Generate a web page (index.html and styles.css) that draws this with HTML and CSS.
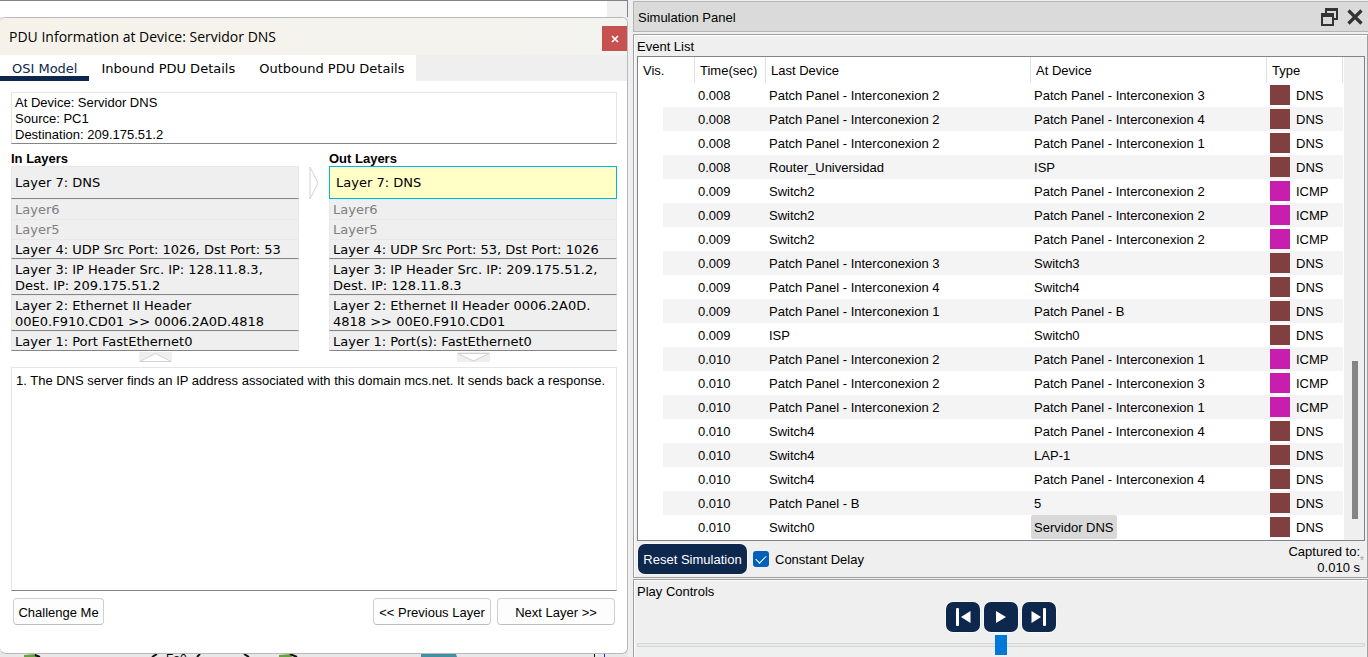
FILE: index.html
```html
<!DOCTYPE html>
<html lang="en">
<head>
<meta charset="utf-8">
<title>Simulation</title>
<link rel="stylesheet" href="styles.css">
</head>
<body>
<div class="app">
  <main class="workspace">
    <div class="canvas-top"><span class="canvas-scroll"></span></div>
    <section class="dialog" aria-label="PDU Information">
      <header class="dialog-title">
        <h1>PDU Information at Device: Servidor DNS</h1>
        <button class="dialog-close" aria-label="Close"><svg width="8" height="8" viewBox="0 0 8 8"><path d="M1 1L7 7M7 1L1 7" stroke="#fff" stroke-width="1.7"/></svg></button>
      </header>
      <nav class="tabs">
        <button class="tab tab-active">OSI Model</button>
        <button class="tab">Inbound PDU Details</button>
        <button class="tab">Outbound PDU Details</button>
      </nav>
      <div class="dialog-body">
        <div class="box device">At Device: Servidor DNS<br>Source: PC1<br>Destination: 209.175.51.2</div>
        <div class="stacks">
          <div class="stack">
            <h2>In Layers</h2>
            <button class="layer layer-app">Layer 7: DNS</button>
            <button class="layer layer-off" disabled>Layer6</button>
            <button class="layer layer-off" disabled>Layer5</button>
            <button class="layer">Layer 4: UDP Src Port: 1026, Dst Port: 53</button>
            <button class="layer">Layer 3: IP Header Src. IP: 128.11.8.3,<br>Dest. IP: 209.175.51.2</button>
            <button class="layer">Layer 2: Ethernet II Header<br>00E0.F910.CD01 &gt;&gt; 0006.2A0D.4818</button>
            <button class="layer">Layer 1: Port FastEthernet0</button>
            <svg class="flow" width="33" height="10" viewBox="0 0 33 10"><path fill="#efefef" d="M0 0H33V10H0z"/><path d="M1 9.5L16.500 1.500L32 9.500z" fill="#fff" stroke="#d2d2d2"/></svg>
          </div>
          <div class="crossing"><svg width="10" height="34" viewBox="0 0 10 34"><path d="M1 1L9 17L1 33z" fill="#fff" stroke="#d2d2d2"/></svg></div>
          <div class="stack">
            <h2>Out Layers</h2>
            <button class="layer layer-app layer-selected">Layer 7: DNS</button>
            <button class="layer layer-off" disabled>Layer6</button>
            <button class="layer layer-off" disabled>Layer5</button>
            <button class="layer">Layer 4: UDP Src Port: 53, Dst Port: 1026</button>
            <button class="layer">Layer 3: IP Header Src. IP: 209.175.51.2,<br>Dest. IP: 128.11.8.3</button>
            <button class="layer">Layer 2: Ethernet II Header 0006.2A0D.<br>4818 &gt;&gt; 00E0.F910.CD01</button>
            <button class="layer">Layer 1: Port(s): FastEthernet0</button>
            <svg class="flow" width="33" height="10" viewBox="0 0 33 10"><path fill="#efefef" d="M0 0H33V10H0z"/><path d="M1 1.500L16.500 9L32 1.500z" fill="#fff" stroke="#d2d2d2"/></svg>
          </div>
        </div>
        <div class="box details">1. The DNS server finds an IP address associated with this domain mcs.net. It sends back a response.</div>
        <div class="actions">
          <button class="plain">Challenge Me</button>
          <button class="plain plain-wide push">&lt;&lt; Previous Layer</button>
          <button class="plain plain-wide">Next Layer &gt;&gt;</button>
        </div>
      </div>
    </section>
    <div class="canvas-bottom">
      <svg width="628" height="3" viewBox="0 0 628 3">
        <path fill="#62a33e" d="M24 1L36 0L37 3H24zM279 1L291 0L292 3H279z" />
        <path d="M35 1L40 3M157 0L152 3M200 0L197 3M244 0L249 3M290 0L297 3" stroke="#111" stroke-width="2"/>
        <path fill="#448fa3" d="M421 0H456L457 3H421z"/>
        <path d="M594.500 0V3" stroke="#111"/><path d="M604.500 0V3" stroke="#2222dd"/>
        <text x="166" y="9" class="port-label">Fa0</text>
      </svg>
    </div>
  </main>

  <aside class="side">
    <header class="side-title">
      <h1>Simulation Panel</h1>
      <button class="side-icon" aria-label="Float panel"><svg width="18" height="20" viewBox="0 0 18 20"><path fill="none" stroke="#333" stroke-width="2" d="M5 6V2H16V12H13"/><path fill="#333" d="M4 1H17V4H4zM0 6H13V10H0z"/><path fill="none" stroke="#333" stroke-width="2" d="M1 7H12V18H1z"/></svg></button>
      <button class="side-icon" aria-label="Close panel"><svg width="16" height="16" viewBox="0 0 16 16"><path stroke="#333" stroke-width="3.200" d="M1.500 1.500L14.500 14.500M14.500 1.500L1.500 14.500"/></svg></button>
    </header>

    <section class="frame events">
      <h2>Event List</h2>
      <div class="list">
        <table>
          <colgroup><col class="c-indent"><col class="c-vis"><col class="c-time"><col class="c-last"><col><col class="c-type"></colgroup>
          <thead><tr><th colspan="2">Vis.</th><th>Time(sec)</th><th>Last Device</th><th>At Device</th><th>Type</th></tr></thead>
          <tbody>
            <tr><td></td><td></td><td>0.008</td><td>Patch Panel - Interconexion 2</td><td>Patch Panel - Interconexion 3</td><td class="dns">DNS</td></tr>
            <tr><td></td><td></td><td>0.008</td><td>Patch Panel - Interconexion 2</td><td>Patch Panel - Interconexion 4</td><td class="dns">DNS</td></tr>
            <tr><td></td><td></td><td>0.008</td><td>Patch Panel - Interconexion 2</td><td>Patch Panel - Interconexion 1</td><td class="dns">DNS</td></tr>
            <tr><td></td><td></td><td>0.008</td><td>Router_Universidad</td><td>ISP</td><td class="dns">DNS</td></tr>
            <tr><td></td><td></td><td>0.009</td><td>Switch2</td><td>Patch Panel - Interconexion 2</td><td class="icmp">ICMP</td></tr>
            <tr><td></td><td></td><td>0.009</td><td>Switch2</td><td>Patch Panel - Interconexion 2</td><td class="icmp">ICMP</td></tr>
            <tr><td></td><td></td><td>0.009</td><td>Switch2</td><td>Patch Panel - Interconexion 2</td><td class="icmp">ICMP</td></tr>
            <tr><td></td><td></td><td>0.009</td><td>Patch Panel - Interconexion 3</td><td>Switch3</td><td class="dns">DNS</td></tr>
            <tr><td></td><td></td><td>0.009</td><td>Patch Panel - Interconexion 4</td><td>Switch4</td><td class="dns">DNS</td></tr>
            <tr><td></td><td></td><td>0.009</td><td>Patch Panel - Interconexion 1</td><td>Patch Panel - B</td><td class="dns">DNS</td></tr>
            <tr><td></td><td></td><td>0.009</td><td>ISP</td><td>Switch0</td><td class="dns">DNS</td></tr>
            <tr><td></td><td></td><td>0.010</td><td>Patch Panel - Interconexion 2</td><td>Patch Panel - Interconexion 1</td><td class="icmp">ICMP</td></tr>
            <tr><td></td><td></td><td>0.010</td><td>Patch Panel - Interconexion 2</td><td>Patch Panel - Interconexion 3</td><td class="icmp">ICMP</td></tr>
            <tr><td></td><td></td><td>0.010</td><td>Patch Panel - Interconexion 2</td><td>Patch Panel - Interconexion 1</td><td class="icmp">ICMP</td></tr>
            <tr><td></td><td></td><td>0.010</td><td>Switch4</td><td>Patch Panel - Interconexion 4</td><td class="dns">DNS</td></tr>
            <tr><td></td><td></td><td>0.010</td><td>Switch4</td><td>LAP-1</td><td class="dns">DNS</td></tr>
            <tr><td></td><td></td><td>0.010</td><td>Switch4</td><td>Patch Panel - Interconexion 4</td><td class="dns">DNS</td></tr>
            <tr><td></td><td></td><td>0.010</td><td>Patch Panel - B</td><td>5</td><td class="dns">DNS</td></tr>
            <tr><td></td><td></td><td>0.010</td><td>Switch0</td><td class="current"><span>Servidor DNS</span></td><td class="dns">DNS</td></tr>
          </tbody>
        </table>
        <div class="scroll"><div class="scroll-thumb"></div></div>
      </div>
      <div class="event-bar">
        <button class="navy reset">Reset Simulation</button>
        <label class="delay"><input type="checkbox" checked><span>Constant Delay</span></label>
        <p class="captured">Captured to:<br>0.010 s</p>
        <span class="star">*</span>
      </div>
    </section>

    <section class="frame play">
      <h2>Play Controls</h2>
      <div class="play-buttons">
        <button class="navy step" aria-label="Back"><svg width="16" height="18" viewBox="0 0 16 18"><rect x="1" y="0" width="3" height="18" rx="1" fill="#fff"/><path d="M15.500 3V15L6 9z" fill="#fff"/></svg></button>
        <button class="navy step" aria-label="Play"><svg width="10" height="12" viewBox="0 0 10 12"><path d="M0 0L10 6L0 12z" fill="#fff"/></svg></button>
        <button class="navy step" aria-label="Forward"><svg width="16" height="18" viewBox="0 0 16 18"><rect x="12" y="0" width="3" height="18" rx="1" fill="#fff"/><path d="M.5 3V15L10 9z" fill="#fff"/></svg></button>
      </div>
      <input class="speed" type="range" min="0" max="100" value="50" aria-label="Play speed">
    </section>
  </aside>
</div>
</body>
</html>
```

FILE: styles.css
```css
* { box-sizing: border-box; }

body {
  margin: 0;
  background: #efefef;
  color: #000;
  font: 13px/16px "Liberation Sans", Arial, sans-serif;
}

h1, h2, p { margin: 0; font-size: 13px; font-weight: normal; }

button { font: inherit; color: inherit; margin: 0; padding: 0; border: 0; background: none; }

svg { display: block; }

.app {
  display: grid;
  grid-template-columns: 628fr 740fr;
  height: 100vh;
  min-height: 657px;
  overflow: hidden;
}

/* Workspace and dialog */
.workspace { display: flex; flex-direction: column; min-width: 0; background: #e8e8e8; }

.canvas-top {
  display: flex;
  justify-content: flex-end;
  height: 17px;
  border-top: 1px solid #80828e;
  border-right: 1px solid #80828e;
  background: #fff;
}

.canvas-scroll { width: 20px; background: #efefef; }

.canvas-bottom { height: 3px; overflow: hidden; }

.port-label { font-size: 12px; }

.dialog {
  flex: 1;
  display: flex;
  flex-direction: column;
  border: 1px solid #b9b9b9;
  border-left: 0;
  border-radius: 6px;
  overflow: hidden;
  background: #fff;
}

.dialog-title {
  display: flex;
  align-items: center;
  justify-content: space-between;
  height: 37px;
  padding-left: 9px;
  background: linear-gradient(to right, #f6f2ea, #f3f3ef);
}

.dialog-title h1 { font: 14px/20px "Open Sans", "Noto Sans", sans-serif; }

.dialog-close {
  display: grid;
  place-items: center;
  width: 25px;
  height: 25px;
  margin-top: 4px;
  background: #c75050;
}

.tabs {
  display: flex;
  height: 26px;
  background: #efefef;
  font: 13px/16px "DejaVu Sans", Verdana, sans-serif;
}

.tab { padding: 6px 12px 0; background: #fff; border-bottom: 5px solid #fff; white-space: nowrap; }

.tab-active { color: #0d274d; border-bottom-color: #0d274d; }

.dialog-body {
  flex: 1;
  display: flex;
  flex-direction: column;
  padding: 11px 10px 28px 11px;
}

.box { border: 1px solid #e5e5e5; border-bottom-color: #858585; }

.device { padding: 2px 3px 0; height: 52px; }

.stacks {
  display: grid;
  grid-template-columns: 1fr 30px 1fr;
  margin: 7px 0 5px;
}

.stack { display: flex; flex-direction: column; min-width: 0; }

.stack h2 { height: 15px; font-weight: bold; }

.crossing { display: flex; justify-content: center; padding-top: 15px; }

.layer {
  padding: 2px 3px 0;
  border: 1px solid #e8e8e8;
  border-bottom-color: #858585;
  background: #efefef;
  font: 13px/16px "DejaVu Sans", Verdana, sans-serif;
  text-align: left;
  white-space: nowrap;
}

.layer-app { height: 33px; padding: 1px 3px; }

.layer-off { color: #808080; border-bottom-color: #efefef; }

.layer-selected { padding: 1px 6px; border-color: #00b4e5; background: #ffffc6; }

.flow { align-self: center; margin-top: 1px; }

.details { flex: 1; padding: 5px 4px; }

.actions { display: flex; gap: 6px; padding: 7px 2px 0; }

.plain {
  height: 27px;
  min-width: 91px;
  padding-top: 2px;
  border: 1px solid #cfcfcf;
  border-bottom-color: #bdbdbd;
  border-radius: 4px;
  background: #fdfdfd;
}

.plain-wide { width: 118px; }

.push { margin-left: auto; }

/* Simulation panel */
.side { display: flex; flex-direction: column; min-width: 0; padding: 1px 0 0 5px; }

.side-title {
  display: flex;
  align-items: center;
  gap: 8px;
  height: 31px;
  padding: 0 5px 0 4px;
  border: 1px solid #b4b4b4;
  border-right: 0;
  background: #dadada;
}

.side-title h1 { flex: 1; padding-top: 2px; }

.frame { border: 1px solid #a0a0a0; }

.events {
  display: flex;
  flex-direction: column;
  flex: 1;
  margin-top: 2px;
  padding: 3px 2px 3px 3px;
  box-shadow: inset 1px 1px #fff;
}

.frame h2 { height: 18px; padding-top: 1px; }

.list { flex: 1; display: flex; border: 1px solid #80828e; background: #fff; }

table { flex: 1; align-self: flex-start; table-layout: fixed; width: 100%; border-collapse: separate; border-spacing: 0; }

.c-indent { width: 25px; }
.c-vis { width: 32px; }
.c-time { width: 71px; }
.c-last { width: 37.6%; }
.c-type { width: 76px; }

th {
  height: 26px;
  padding: 2px 0 0 5px;
  border-right: 1px solid #e0e0e0;
  font-weight: normal;
  text-align: left;
  white-space: nowrap;
}

td { height: 24px; padding: 2px 0 0 3px; white-space: nowrap; }

tbody tr:nth-child(even) td:not(:first-child) { background: #f4f4f4; }

.dns, .icmp { padding-top: 0; }

.dns::before, .icmp::before {
  content: "";
  display: inline-block;
  width: 20px;
  height: 20px;
  margin-right: 6px;
  vertical-align: -5px;
  background: #804040;
}

.icmp::before { background: #c81eae; }

.current { padding: 0; }

.current span { display: inline-block; padding: 5px 3px 3px; border-radius: 2px; background: #d9d9d9; }

.scroll { flex: none; width: 20px; margin-left: 1px; padding: 304px 5px 0 7px; background: #efefef; }

.scroll-thumb { width: 6px; height: 158px; margin-left: auto; margin-right: 1px; background: #858585; }

.event-bar { display: flex; align-items: center; height: 33px; padding: 3px 0 0 1px; }

.navy { background: #0d274d; color: #fff; border-radius: 7px; box-shadow: 0 0 0 1px #f8f8f8; }

.reset { width: 109px; height: 30px; padding-top: 2px; }

.delay { display: flex; align-items: center; gap: 6px; margin-left: 6px; }

.delay span { padding-top: 2px; }

.delay input {
  appearance: none;
  display: grid;
  place-items: center;
  width: 16px;
  height: 16px;
  margin: 0;
  border-radius: 3px;
  background: #005fb8;
}

.delay input:checked::before {
  content: "";
  width: 9px;
  height: 5px;
  margin-bottom: 2px;
  border: solid #fff;
  border-width: 0 0 1px 1px;
  transform: rotate(-45deg);
}

.captured { margin-left: auto; padding-top: 2px; text-align: right; }

.star { width: 5px; padding-top: 4px; color: #a0a0a0; font-size: 10px; }

.play { display: flex; flex-direction: column; height: 78px; margin-top: 1px; padding: 3px 2px 0 3px; border-bottom: 0; box-shadow: inset 1px 1px #fff; }

.play-buttons { display: flex; justify-content: center; gap: 4px; margin: 1px 0 3px; }

.step { display: grid; place-items: center; width: 34px; height: 30px; }

.speed { appearance: none; display: block; width: 100%; height: 20px; margin: 0; background: none; }

.speed::-webkit-slider-runnable-track { height: 4px; border: 1px solid #d6d6d6; background: #e7eaea; }

.speed::-webkit-slider-thumb { appearance: none; width: 12px; height: 20px; margin-top: -9px; background: #0078d7; }
```
